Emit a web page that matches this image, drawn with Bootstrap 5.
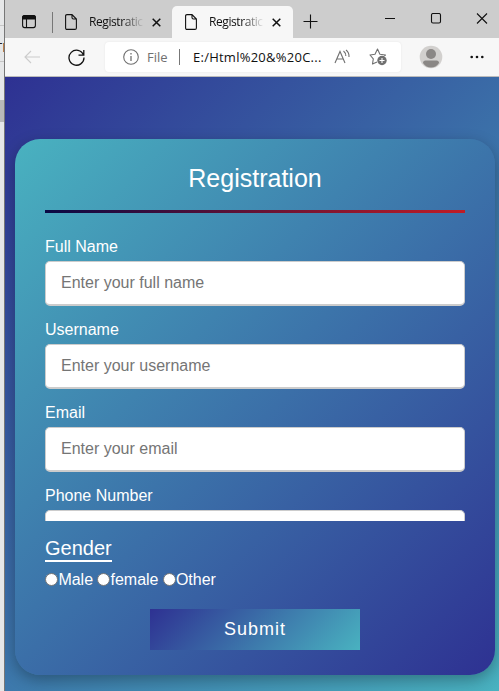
<!DOCTYPE html>
<html lang="en">
<head>
<meta charset="utf-8">
<meta name="viewport" content="width=device-width, initial-scale=1">
<title>Registration</title>
<link href="https://cdn.jsdelivr.net/npm/bootstrap@5.3.0/dist/css/bootstrap.min.css" rel="stylesheet">
<style>
html,body{height:100%}
body{font-family:"Liberation Sans",Arial,sans-serif;font-size:16px;line-height:18px;overflow:hidden;color:#fff}
svg{display:block;flex:none;fill:none;stroke:#111;stroke-width:1.1}
svg.bold{stroke-width:1.5}
/* sliver of the window behind the browser */
.behind{width:5px;background:#e6e7e8;border-right:1px solid #777;color:#222;font:13px/16px "Open Sans",sans-serif}
.behind .b-a{height:26px;border-bottom:1px solid #c6c6c6}
.behind .b-b{height:36px;padding-top:13px;border-bottom:1px solid #c6c6c6;text-indent:-5px}
.behind .b-c{height:22px;margin-top:38px;background:#b9b9b9}
.chrome{font-family:"Open Sans","Noto Sans",sans-serif;color:#111}
.tabs{height:38px;background:#cdcdcd;padding-left:17px}
.tab{height:32px;width:121px;margin-top:6px;padding-left:8px}
.tab.on{background:#f7f7f7;border-radius:5px 5px 0 0;padding-left:13px;margin-left:-6px}
.tab-name{width:55px;margin-left:12px;margin-right:8px;font-size:12px;letter-spacing:-.42px;line-height:32px;-webkit-mask-image:linear-gradient(90deg,#000 60%,transparent);mask-image:linear-gradient(90deg,#000 60%,transparent)}
.tab-sep{width:1px;height:21px;margin:12px 0 0 16px;background:#777}
.i-panes{margin-top:14px}
.i-plus{margin:14px 0 0 10px}
.i-window{margin:13px 0 0 67px}
.i-back{stroke:#ccc}
.i-reload{margin-left:27px}
.i-grey{stroke:#707070}
.i-read{margin-left:10px}
.i-star{margin-left:18px}
.i-user{margin-left:18px}
.i-dots{margin-left:27px}
.bar{height:39px;background:#f7f7f7;border-bottom:1px solid #bcbcbc;padding-left:20px}
.bar>*{position:relative}
.bar .i-back,.bar .i-reload,.bar .i-user,.bar .i-dots,.bar .address{transform:translateX(-1px)}
.address{width:296px;height:30px;margin-left:20px;padding-left:18px;background:#fff;border-radius:4px;font-size:13px;box-shadow:0 0 2px #e2e2e2}
.address .scheme{color:#707070;margin-left:8px;width:21px}
.address .rule{width:1px;height:16px;background:#777;margin:0 13px 0 11px}
.address .url{width:131px;letter-spacing:.25px;white-space:nowrap}
.view{background:linear-gradient(135deg,#2e3192,#49b2c0);padding:62px 4px 0 10px}
.panel{height:536px;padding:25px 30px 0;border-radius:25px;background:linear-gradient(135deg,#49b2c0,#2e3192);box-shadow:0 5px 15px rgba(0,0,0,.3)}
.heading{font-size:25px;line-height:29px;height:46px;margin:0;font-weight:400;text-align:center}
.stripe{height:3px;background:linear-gradient(90deg,#090944,#c01c25)}
.fields{height:308px;padding-top:24px;overflow:hidden}
.field{height:83px}
.field label{display:block;height:24px;padding-top:1px}
.field input{height:45px;padding:0 15px;border:1px solid #ccc;border-bottom-width:2px;border-radius:5px;font-size:16px;color:#333}
.field input::placeholder{color:#757575;opacity:1}
.gender{font-size:20px;line-height:25px;height:26px;border-bottom:2px solid #fff;margin-top:15px}
.choices{height:18px;margin-top:9px;margin-bottom:20px}
.choice{margin-right:4px}
.choice input{appearance:none;width:13px;height:13px;border:1px solid #767676;border-radius:50%;background:#fff;margin:-2px .4px 0 0}
.send{width:210px;height:41px;border:0;background:linear-gradient(135deg,#2e3192,#49b2c0);color:#fff;font-size:18px;line-height:21px;letter-spacing:1px;padding:0}
</style>
<script src="https://cdn.jsdelivr.net/npm/bootstrap@5.3.0/dist/js/bootstrap.bundle.min.js"></script>
</head>
<body class="d-flex">
<div class="behind flex-shrink-0 overflow-hidden"><div class="b-a"></div><div class="b-b">TN</div><div class="b-c"></div></div>
<main class="d-flex flex-column flex-grow-1 overflow-hidden">
  <header class="chrome">
    <div class="tabs d-flex">
      <svg class="i-panes" width="14" height="15" viewBox="0 0 14 15"><rect x=".6" y="1.600" width="12.800" height="12" rx="2"/><path d="M.6 5V3.500q0-2 2-2h8.800q2 0 2 2V5z" fill="#111"/><path d="M4.500 5v8.500"/></svg>
      <div class="tab-sep"></div>
      <div class="tab d-flex align-items-center ms-1">
        <svg width="12" height="16" viewBox="0 0 12 16"><path d="M2 .6h5l4.400 4.400v8.900q0 1.500-1.500 1.500H2Q.6 15.400.6 13.900V2Q.6.6 2 .6zM7 .6v3q0 1.400 1.400 1.400h3"/></svg>
        <div class="tab-name overflow-hidden text-nowrap">Registratic</div>
        <svg class="bold" width="9" height="9" viewBox="0 0 9 9"><path d="M.7.7l7.600 7.600M8.300.7L.7 8.300"/></svg>
      </div>
      <div class="tab on d-flex align-items-center">
        <svg width="12" height="16" viewBox="0 0 12 16"><path d="M2 .6h5l4.400 4.400v8.900q0 1.500-1.500 1.500H2Q.6 15.400.6 13.900V2Q.6.6 2 .6zM7 .6v3q0 1.400 1.400 1.400h3"/></svg>
        <div class="tab-name overflow-hidden text-nowrap">Registratic</div>
        <svg class="bold" width="9" height="9" viewBox="0 0 9 9"><path d="M.7.7l7.600 7.600M8.300.7L.7 8.300"/></svg>
      </div>
      <svg class="i-plus" width="15" height="15" viewBox="0 0 15 15"><path d="M7.500.5v14M.5 7.500h14"/></svg>
      <svg class="i-window" width="103" height="11" viewBox="0 0 103 11"><path d="M0 5.500h10M92 .5l10 10M102 .5l-10 10"/><rect x="46.500" y=".5" width="9" height="9.500" rx="1.500"/></svg>
    </div>
    <div class="bar d-flex align-items-center">
      <svg class="i-back" width="17" height="14" viewBox="0 0 17 14"><path d="M16 7H1M7 1L1 7l6 6"/></svg>
      <svg class="i-reload" width="17" height="17" viewBox="0 0 17 17"><path stroke-width="1.300" d="M15.500 6A7.500 7.500 0 1 0 16 8.500M15.800 1v5.200h-5.300"/></svg>
      <div class="address d-flex align-items-center">
        <svg class="i-grey" width="16" height="16" viewBox="0 0 16 16"><circle cx="8" cy="8" r="7.300"/><path d="M8 7v5M8 4v1.500" stroke-width="1.300"/></svg>
        <span class="scheme">File</span><span class="rule"></span><span class="url">E:/Html%20&amp;%20C...</span>
        <svg class="i-read i-grey" width="17" height="16" viewBox="0 0 17 16"><path d="M1 14L6 2.500 11 14M2.800 10h6.500M9.500 2q2.500 2 2.300 5M12 1q3.300 2.600 3 7"/></svg>
        <svg class="i-star i-grey" width="19" height="18" viewBox="0 0 19 18"><path stroke-linejoin="round" d="M8 14l-4.500 2 .8-5.200L1 7l5-.8L8.500 1l2.400 5.200 5.600.8-1.200 1"/><circle cx="13" cy="12.500" r="4.700" fill="#707070" stroke="none"/><path stroke="#fff" d="M13 10v5M10.500 12.500h5"/></svg>
      </div>
      <svg class="i-user" width="24" height="24" viewBox="0 0 24 24"><g stroke="none"><circle cx="12" cy="12" r="11.300" fill="#d2d0ce"/><circle cx="12" cy="9" r="5" fill="#8a8785"/><path d="M4 18q0-2.500 2.500-2.500h11q2.500 0 2.500 2.500-3 4.500-8 4.500T4 18z" fill="#8a8785"/></g></svg>
      <svg class="i-dots" width="14" height="4" viewBox="0 0 14 4"><g fill="#111" stroke="none"><circle cx="1.700" cy="2" r="1.300"/><circle cx="7" cy="2" r="1.300"/><circle cx="12.300" cy="2" r="1.300"/></g></svg>
    </div>
  </header>
  <section class="view flex-grow-1">
    <form class="panel">
      <h1 class="heading">Registration</h1>
      <div class="stripe"></div>
      <div class="fields">
        <div class="field"><label for="f1">Full Name</label><input id="f1" class="w-100" placeholder="Enter your full name"></div>
        <div class="field"><label for="f2">Username</label><input id="f2" class="w-100" placeholder="Enter your username"></div>
        <div class="field"><label for="f3">Email</label><input id="f3" class="w-100" placeholder="Enter your email"></div>
        <div class="field"><label for="f4">Phone Number</label><input id="f4" class="w-100"></div>
      </div>
      <div class="d-flex"><span class="gender">Gender</span></div>
      <div class="choices d-flex">
        <label class="choice d-flex align-items-center"><input type="radio" name="g">Male</label>
        <label class="choice d-flex align-items-center"><input type="radio" name="g">female</label>
        <label class="choice d-flex align-items-center"><input type="radio" name="g">Other</label>
      </div>
      <button type="button" class="send d-block mx-auto">Submit</button>
    </form>
  </section>
</main>
</body>
</html>
